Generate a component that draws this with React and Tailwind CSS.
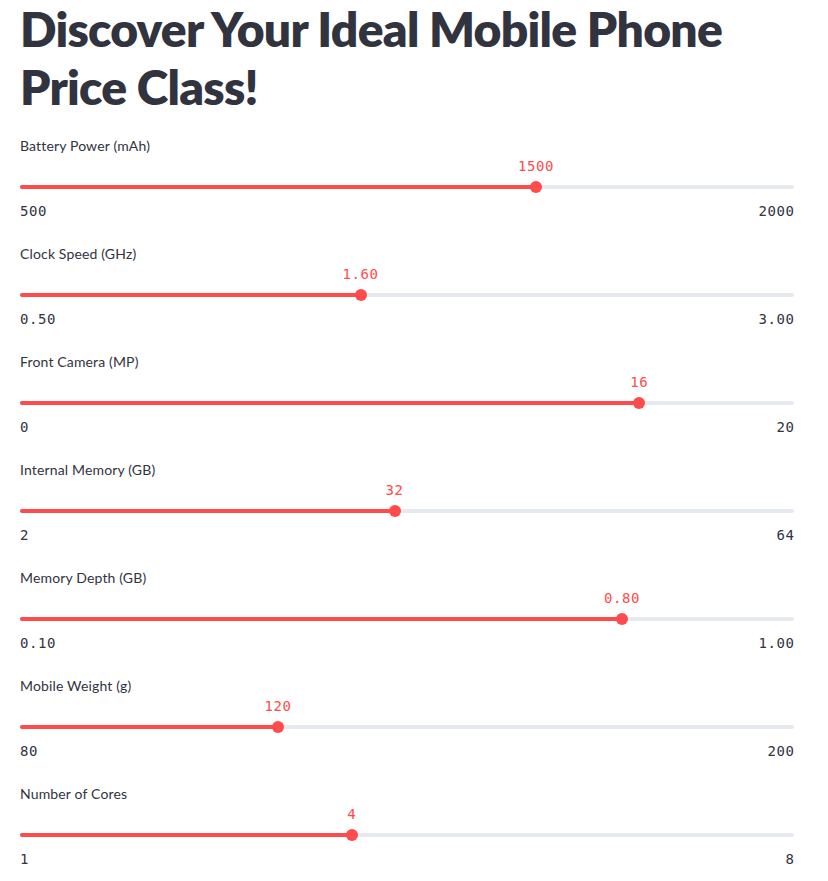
import React from "react";

const sliders = [
  { label: "Battery Power (mAh)", min: 500, max: 2000, value: 1500, fmt: (v) => String(v) },
  { label: "Clock Speed (GHz)", min: 0.5, max: 3, value: 1.6, fmt: (v) => v.toFixed(2) },
  { label: "Front Camera (MP)", min: 0, max: 20, value: 16, fmt: (v) => String(v) },
  { label: "Internal Memory (GB)", min: 2, max: 64, value: 32, fmt: (v) => String(v) },
  { label: "Memory Depth (GB)", min: 0.1, max: 1, value: 0.8, fmt: (v) => v.toFixed(2) },
  { label: "Mobile Weight (g)", min: 80, max: 200, value: 120, fmt: (v) => String(v) },
  { label: "Number of Cores", min: 1, max: 8, value: 4, fmt: (v) => String(v) },
];

const sans = { fontFamily: "Lato, 'Noto Sans', sans-serif" };

function Slider({ s }) {
  const pct = ((s.value - s.min) / (s.max - s.min)) * 100;
  return (
    <div className="flex flex-col">
      <div className="h-[24px] text-[14px] leading-[24px] tracking-[0.15px] text-[#31333f]" style={sans}>
        {s.label}
      </div>
      <div className="h-[19px]" />
      <div className="relative h-[20px] flex items-center">
        <div className="w-full h-[4px] rounded-full bg-[#e6e9ef]" />
        <div
          className="absolute left-0 h-[4px] rounded-full bg-[#ff4b4b]"
          style={{ width: pct + "%" }}
        />
        <div
          className="absolute w-[12px] h-[12px] rounded-full bg-[#ff4b4b] -translate-x-1/2"
          style={{ left: pct + "%" }}
        />
        <div
          className="absolute top-[-20px] -translate-x-1/2 text-[14px] leading-[18px] tracking-[0.6px] text-[#ff4b4b] font-['DejaVu_Sans_Mono',monospace]"
          style={{ left: pct + "%" }}
        >
          {s.fmt(s.value)}
        </div>
      </div>
      <div className="h-[29px] flex items-center justify-between text-[14px] tracking-[0.6px] text-[#31333f] font-['DejaVu_Sans_Mono',monospace]">
        <span>{s.fmt(s.min)}</span>
        <span className="-mr-[0.6px]">{s.fmt(s.max)}</span>
      </div>
    </div>
  );
}

export default function App() {
  return (
    <div className="bg-white w-[828px] min-h-[881px] px-[20px] pr-[34px]">
      <h1
        className="text-[48px] leading-[57.6px] font-extrabold text-[#31333f] tracking-[-0.75px]"
        style={sans}
      >
        Discover Your Ideal Mobile Phone Price Class!
      </h1>
      <div className="mt-[19px] flex flex-col gap-[16px]">
        {sliders.map((s) => (
          <Slider key={s.label} s={s} />
        ))}
      </div>
    </div>
  );
}
